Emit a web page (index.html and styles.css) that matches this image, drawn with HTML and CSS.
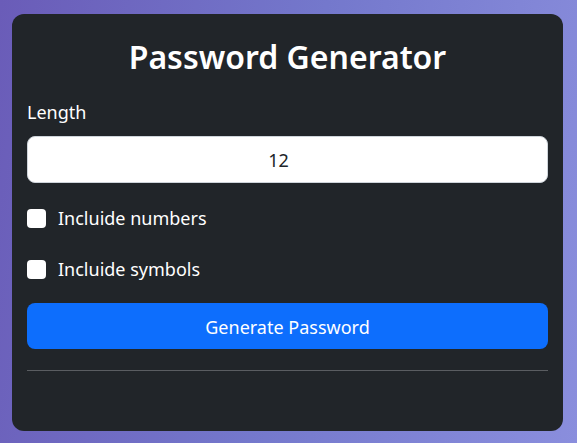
FILE: index.html
```html
<!DOCTYPE html>
<html>
<head>
<meta charset="utf-8">
<link rel="stylesheet" href="styles.css">
</head>
<body>
<div class="card">
  <h1 class="title">Password Generator</h1>
  <label class="label" for="len">Length</label>
  <input id="len" class="input" type="text" value="12">
  <label class="check"><span class="box"></span><span>Incluide numbers</span></label>
  <label class="check"><span class="box"></span><span>Incluide symbols</span></label>
  <button class="btn">Generate Password</button>
  <hr class="rule">
</div>
</body>
</html>
```
FILE: styles.css
```css
html, body { margin: 0; padding: 0; }
body {
  width: 577px;
  height: 443px;
  overflow: hidden;
  background: linear-gradient(100deg, #6a5cb8 0%, #7478cc 50%, #8a8edd 100%);
  font-family: "Noto Sans", "Open Sans", sans-serif;
}
.card {
  box-sizing: border-box;
  width: 551px;
  height: 417px;
  margin: 14px 0 0 12px;
  padding: 15px;
  background: #212529;
  border-radius: 12px;
  display: flex;
  flex-direction: column;
}
.title {
  margin: 7px 0 20px;
  text-align: center;
  color: #fff;
  font-size: 32px;
  font-weight: 600;
  line-height: 41px;
}
.label {
  color: #fff;
  font-size: 18px;
  line-height: 30px;
  margin-bottom: 9px;
}
.input {
  box-sizing: border-box;
  height: 47px;
  width: 100%;
  border: 1px solid #ced4da;
  border-radius: 8px;
  background: #fff;
  text-align: center;
  font: 18px "Noto Sans", sans-serif;
  color: #212529;
  padding: 0 34px 0 16px;
  margin: 0;
}
.check {
  display: flex;
  align-items: center;
  gap: 12px;
  color: #fff;
  font-size: 18px;
  line-height: 30px;
  margin-top: 20px;
}
.check + .check { margin-top: 21px; }
.box {
  width: 19px;
  height: 19px;
  background: #fff;
  border-radius: 4px;
  flex: none;
}
.btn {
  margin-top: 19px;
  height: 46px;
  padding: 2px 0 0;
  border: 0;
  border-radius: 8px;
  background: #0d6efd;
  color: #fff;
  font: 18px "Noto Sans", sans-serif;
}
.rule {
  margin: 21px 0 0;
  border: 0;
  border-top: 1px solid #5a5d61;
}
```
